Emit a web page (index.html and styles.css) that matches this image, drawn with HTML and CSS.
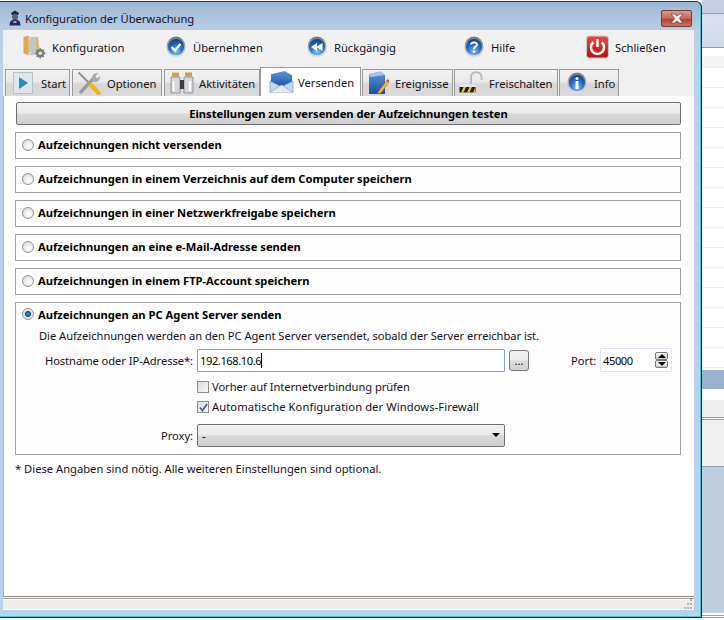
FILE: index.html
```html
<!DOCTYPE html>
<html>
  <head>
    <title>Konfiguration der Überwachung</title>
    <link rel="stylesheet" href="styles.css">
  </head>
  <body>
    <svg class="defs" width="0" height="0">
      <defs>
        <radialGradient id="orb" cx="0.5" cy="0.78" r="0.8">
          <stop offset="0" stop-color="#86c2f7"/>
          <stop offset="0.5" stop-color="#2c70c9"/>
          <stop offset="1" stop-color="#103a86"/>
        </radialGradient>
        <linearGradient id="ring" x1="0" y1="0" x2="0" y2="1">
          <stop offset="0" stop-color="#6f767c"/>
          <stop offset="1" stop-color="#dfe5ea"/>
        </linearGradient>
        <linearGradient id="red" x1="0" y1="0" x2="0" y2="1">
          <stop offset="0" stop-color="#ee4a44"/>
          <stop offset="1" stop-color="#b50f0f"/>
        </linearGradient>
        <linearGradient id="folder" x1="0" y1="0" x2="1" y2="1">
          <stop offset="0" stop-color="#f3d190"/>
          <stop offset="1" stop-color="#c99a4c"/>
        </linearGradient>
        <linearGradient id="mail" x1="0" y1="0" x2="0" y2="1">
          <stop offset="0" stop-color="#5b97dc"/>
          <stop offset="1" stop-color="#1c4f9e"/>
        </linearGradient>
        <symbol id="i-orb" viewBox="0 0 20 22">
          <ellipse cx="10" cy="11" rx="9.5" ry="10.5" fill="url(#ring)"/>
          <circle cx="10" cy="11" r="8" fill="url(#orb)"/>
        </symbol>
      </defs>
    </svg>

    <div class="window">
      <div class="titlebar">
        <svg class="title-icon" viewBox="0 0 14 16">
          <path d="M3 3 L7 0.5 L11 3 L10 5 H4 Z" fill="#1c2550"/>
          <circle cx="7" cy="7" r="3" fill="#5b6280"/>
          <path d="M1.5 15.5 C1.5 11 4 9.5 7 9.5 S12.5 11 12.5 15.5 Z" fill="#232c58"/>
          <rect x="5.5" y="11" width="3" height="2" fill="#9aa6d0"/>
        </svg>
        <span class="title-text">Konfiguration der Überwachung</span>
        <div class="close-btn">
          <svg viewBox="0 0 16 11" width="16" height="11">
            <path d="M2 1 H6 L8 3.2 L10 1 H14 L10.3 5.5 L14 10 H10 L8 7.8 L6 10 H2 L5.7 5.5 Z" fill="#f4f0ee" stroke="#6b3a36" stroke-width="0.7"/>
          </svg>
        </div>
      </div>

      <div class="client">
        <div class="toolbar">
          <div class="tool tool-config">
            <svg class="tool-icon-lg" viewBox="0 0 24 25">
              <path d="M0.5 2 L6 0.5 V21 L0.5 19 Z" fill="#d9a955"/>
              <path d="M6 2 H16 V18 H6 Z" fill="url(#folder)"/>
              <path d="M7 3 H14 V21 H7 Z" fill="#c3c6c8"/>
              <path d="M14 9 L17 11 V18 H14 Z" fill="#e0b971"/>
              <circle cx="18" cy="19" r="4.4" fill="#7d7f80"/>
              <circle cx="18" cy="19" r="1.8" fill="#e8e8e8"/>
              <path d="M18 13.5 V15 M18 23 V24.5 M12.5 19 H14 M22 19 H23.5 M14.2 15.2 L15.2 16.2 M20.8 21.8 L21.8 22.8 M21.8 15.2 L20.8 16.2 M15.2 21.8 L14.2 22.8" stroke="#7d7f80" stroke-width="1.6"/>
            </svg>
            <span>Konfiguration</span>
          </div>
          <div class="tool tool-apply">
            <svg class="tool-icon" viewBox="0 0 20 22">
              <use href="#i-orb"/>
              <path d="M5.5 11 L9 14.5 L14.5 8" fill="none" stroke="#fff" stroke-width="2.4"/>
            </svg>
            <span>Übernehmen</span>
          </div>
          <div class="tool tool-undo">
            <svg class="tool-icon" viewBox="0 0 20 22">
              <use href="#i-orb"/>
              <path d="M10 7 V15 L4 11 Z M15.5 7 V15 L9.5 11 Z" fill="#fff"/>
            </svg>
            <span>Rückgängig</span>
          </div>
          <div class="tool tool-help">
            <svg class="tool-icon" viewBox="0 0 20 22">
              <use href="#i-orb"/>
              <path d="M7 8.5 C7 5.8 13 5.8 13 8.7 C13 10.6 10 10.6 10 13" fill="none" stroke="#fff" stroke-width="1.9"/>
              <circle cx="10" cy="15.6" r="1.2" fill="#fff"/>
            </svg>
            <span>Hilfe</span>
          </div>
          <div class="tool tool-close">
            <svg class="tool-icon-lg" viewBox="0 0 22 22">
              <rect x="0.5" y="0.5" width="21" height="21" rx="3" fill="url(#red)" stroke="#c9c9c9"/>
              <path d="M7 6.5 A6.3 6.3 0 1 0 15 6.5" fill="none" stroke="#fff" stroke-width="2.3"/>
              <path d="M11 3.5 V11" stroke="#fff" stroke-width="2.4"/>
            </svg>
            <span>Schließen</span>
          </div>
        </div>

        <div class="tabs">
          <div class="tab tab-start">
            <svg class="tab-icon tab-icon-start" viewBox="0 0 20 22">
              <rect x="0.5" y="0.5" width="19" height="21" fill="#dfe6ea" stroke="#b8c2c8"/>
              <path d="M6 5 L15 11 L6 17 Z" fill="#1f8fb8"/>
            </svg>
            <span>Start</span>
          </div>
          <div class="tab tab-options">
            <svg class="tab-icon tab-icon-options" viewBox="0 0 24 24">
              <path d="M1.5 1.5 L13.5 13.5" stroke="#8c9094" stroke-width="2"/>
              <path d="M3 22 L16 8" stroke="#9a9da0" stroke-width="3.4"/>
              <path d="M14 14 L21.5 22" stroke="#eeb90c" stroke-width="4.4" stroke-linecap="round"/>
              <path d="M15 9 C14 5 17 1.5 21.5 2 L18.5 5 L20 7.5 L23 5 C23.5 9 20 12 16.5 11 Z" fill="#a7abae"/>
            </svg>
            <span>Optionen</span>
          </div>
          <div class="tab tab-activity">
            <svg class="tab-icon tab-icon-activity" viewBox="0 0 24 22">
              <rect x="2" y="0.5" width="7" height="4" fill="#c7a44c"/>
              <rect x="15" y="0.5" width="7" height="4" fill="#c7a44c"/>
              <path d="M1 5 H10 V21 H1 Z M14 5 H23 V21 H14 Z" fill="#d6d8d9" stroke="#777a7c" stroke-width="0.7"/>
              <path d="M10 8 H14 V17 H10 Z" fill="#3a3d40"/>
              <rect x="2.5" y="9" width="2" height="10" fill="#fff"/>
              <rect x="19" y="9" width="2" height="10" fill="#fff"/>
            </svg>
            <span>Aktivitäten</span>
          </div>
          <div class="tab tab-active">
            <svg class="tab-icon tab-icon-send" viewBox="0 0 26 24">
              <path d="M2 4 L16 0.5 L24 5 V14 L13 18 L2 13 Z" fill="url(#mail)"/>
              <path d="M1 11 L13 17 L25 11 V23 H1 Z" fill="#c3d6ea" stroke="#7f9cbc" stroke-width="0.7"/>
              <path d="M1 23 L13 15 L25 23" fill="#e2ecf5" stroke="#8aa7c6" stroke-width="0.7"/>
            </svg>
            <span>Versenden</span>
          </div>
          <div class="tab tab-events">
            <svg class="tab-icon tab-icon-events" viewBox="0 0 22 24">
              <path d="M1 3 L13 0.5 L17 4 V23 L1 23 Z" fill="url(#mail)"/>
              <path d="M1 3 L13 0.5 L17 4 L2 6 Z" fill="#a9c4e6"/>
              <path d="M10 21 L19 9 L21 11 L13 22 L9.5 23 Z" fill="#f2b63a" stroke="#8c5a1c" stroke-width="0.5"/>
              <path d="M18.3 10 L19.6 8 L21.6 10 L20.4 11.6 Z" fill="#d9503c"/>
            </svg>
            <span>Ereignisse</span>
          </div>
          <div class="tab tab-unlock">
            <svg class="tab-icon tab-icon-unlock" viewBox="0 0 24 24">
              <path d="M12 13 V6 C12 -0.5 22.5 -0.5 22.5 6 V9" fill="none" stroke="#b9bcbe" stroke-width="2"/>
              <rect x="0.5" y="13" width="16" height="10" fill="#e2e4e5"/>
              <rect x="0.5" y="16" width="16" height="5.5" fill="#1f1f1f"/>
              <path d="M2 21.5 L4.5 16 H7 L4.5 21.5 Z M8 21.5 L10.5 16 H13 L10.5 21.5 Z M14 21.5 L16 17 V21.5 Z" fill="#e8c72a"/>
            </svg>
            <span>Freischalten</span>
          </div>
          <div class="tab tab-info">
            <svg class="tab-icon tab-icon-info" viewBox="0 0 20 22">
              <use href="#i-orb"/>
              <circle cx="10" cy="6.5" r="1.5" fill="#fff"/>
              <rect x="8.6" y="9" width="2.8" height="8" fill="#fff"/>
            </svg>
            <span>Info</span>
          </div>
        </div>

        <div class="page">
          <button class="test-btn">Einstellungen zum versenden der Aufzeichnungen testen</button>

          <div class="group">
            <div class="radio-row"><span class="radio"></span><span class="radio-label">Aufzeichnungen nicht versenden</span></div>
          </div>
          <div class="group">
            <div class="radio-row"><span class="radio"></span><span class="radio-label">Aufzeichnungen in einem Verzeichnis auf dem Computer speichern</span></div>
          </div>
          <div class="group">
            <div class="radio-row"><span class="radio"></span><span class="radio-label">Aufzeichnungen in einer Netzwerkfreigabe speichern</span></div>
          </div>
          <div class="group">
            <div class="radio-row"><span class="radio"></span><span class="radio-label">Aufzeichnungen an eine e-Mail-Adresse senden</span></div>
          </div>
          <div class="group">
            <div class="radio-row"><span class="radio"></span><span class="radio-label">Aufzeichnungen in einem FTP-Account speichern</span></div>
          </div>

          <div class="group group-open">
            <div class="radio-row"><span class="radio radio-on"></span><span class="radio-label">Aufzeichnungen an PC Agent Server senden</span></div>
            <div class="desc">Die Aufzeichnungen werden an den PC Agent Server versendet, sobald der Server erreichbar ist.</div>
            <div class="field-row">
              <span class="field-label">Hostname oder IP-Adresse*:</span>
              <div class="input host-input"><span class="digits">192.168.10.6</span><span class="caret"></span></div>
              <div class="browse-btn">...</div>
              <span class="port-label">Port:</span>
              <div class="input port-input">
                <span class="digits">45000</span>
                <div class="spin">
                  <span class="spin-btn"><i class="arrow-up"></i></span>
                  <span class="spin-btn"><i class="arrow-down"></i></span>
                </div>
              </div>
            </div>
            <div class="check-list">
              <div class="check-row">
                <span class="check"></span><span class="check-text">Vorher auf Internetverbindung prüfen</span>
              </div>
              <div class="check-row">
                <span class="check check-on">
                  <svg viewBox="0 0 11 11" width="11" height="11"><path d="M2 5.5 L4.5 8.5 L9 2" fill="none" stroke="#4a5f8e" stroke-width="1.8"/></svg>
                </span><span class="check-text check-text-wide">Automatische Konfiguration der Windows-Firewall</span>
              </div>
            </div>
            <div class="field-row proxy-row">
              <span class="field-label">Proxy:</span>
              <div class="select"><span>-</span><i class="arrow-down select-arrow"></i></div>
            </div>
          </div>

          <div class="note">* Diese Angaben sind nötig. Alle weiteren Einstellungen sind optional.</div>
        </div>

        <div class="statusbar">
          <svg class="grip" viewBox="0 0 10 10" width="10" height="10">
            <path d="M8 0h2v2H8z M5 4h2v2H5z M8 4h2v2H8z M2 8h2v2H2z M5 8h2v2H5z M8 8h2v2H8z" fill="#b5b5b5"/>
          </svg>
        </div>
      </div>
    </div>

    <!-- the application behind the dialog -->
    <div class="behind">
      <div class="behind-head"></div>
      <div class="behind-rows">
        <div class="behind-row"></div>
        <div class="behind-row"></div>
        <div class="behind-row"></div>
        <div class="behind-row"></div>
        <div class="behind-row"></div>
        <div class="behind-row"></div>
        <div class="behind-row"></div>
        <div class="behind-row"></div>
        <div class="behind-row"></div>
        <div class="behind-row"></div>
        <div class="behind-row"></div>
        <div class="behind-row"></div>
        <div class="behind-row"></div>
        <div class="behind-row"></div>
        <div class="behind-row"></div>
        <div class="behind-row"></div>
        <div class="behind-selected"></div>
      </div>
      <div class="behind-foot"></div>
      <div class="behind-panel"></div>
      <div class="behind-desk"></div>
      <div class="behind-edge"></div>
    </div>
  </body>
</html>
```

FILE: styles.css
```css
body {
  margin: 0;
  width: 724px;
  height: 620px;
  overflow: hidden;
  display: flex;
  background: #fff;
  font-family: "Noto Sans", Tahoma, sans-serif;
  font-size: 11.2px;
  color: #000;
}

.defs {
  position: absolute;
}

.window {
  width: 702px;
  height: 617px;
  margin-top: 1px;
  flex: none;
  box-sizing: border-box;
  display: flex;
  flex-direction: column;
  padding: 0 7px 7px 3px;
  border-top: 1px solid #2c3238;
  border-right: 1px solid #111;
  border-bottom: 1px solid #111;
  border-top-right-radius: 6px;
  background: linear-gradient(#9bb8d6 0, #bcd0e4 30px, #b9d2ec 90px);
  box-shadow: inset -1px -1px 0 #2fcfe6;
}

.titlebar {
  height: 28px;
  display: flex;
  align-items: center;
  flex: none;
  padding-top: 4px;
  box-sizing: border-box;
  position: relative;
}

.title-icon {
  width: 14px;
  height: 16px;
  margin-left: 5px;
  margin-right: 3px;
  flex: none;
}

.title-text {
  color: #15111e;
  letter-spacing: -0.03px;
}

.close-btn {
  position: absolute;
  top: 8px;
  right: 2px;
  width: 31px;
  height: 17px;
  box-sizing: border-box;
  border: 1px solid #7a3a36;
  border-radius: 2px;
  background: linear-gradient(#d99c90, #c4675a 50%, #b23f34 55%, #c8715f);
  display: flex;
  align-items: center;
  justify-content: center;
}

.client {
  flex: 1;
  display: flex;
  flex-direction: column;
  background: #f0f0f0;
  min-height: 0;
}

.toolbar {
  height: 34px;
  position: relative;
  flex: none;
}

.tool {
  display: flex;
  align-items: center;
  height: 34px;
  position: absolute;
  top: 0;
  color: #14101c;
}

.tool-config { left: 20px; gap: 6px; }
.tool-apply { left: 163px; gap: 7px; }
.tool-undo { left: 304px; gap: 7px; }
.tool-help { left: 461px; gap: 7px; }
.tool-close { left: 583px; gap: 6px; }

.tool-icon {
  width: 20px;
  height: 22px;
}

.tool-icon-lg {
  width: 23px;
  height: 24px;
}

.tabs {
  height: 32px;
  flex: none;
  display: flex;
  align-items: flex-end;
  padding-left: 2px;
  gap: 2px;
}

.tab {
  height: 27px;
  box-sizing: border-box;
  display: flex;
  align-items: center;
  flex: none;
  border: 1px solid #9a9a9a;
  border-bottom: none;
  background: linear-gradient(#f2f2f2, #e9e9e9 45%, #d6d6d6 55%, #dadada);
  color: #14101c;
}

.tab-start { width: 65px; padding-left: 7px; gap: 8px; }
.tab-options { width: 90px; padding-left: 4px; gap: 6px; }
.tab-activity { width: 96px; padding-left: 5px; gap: 5px; }
.tab-events { width: 91px; margin-left: -1px; padding-left: 5px; gap: 5px; }
.tab-unlock { width: 104px; margin-left: -1px; padding-left: 4px; gap: 6px; }
.tab-info { width: 60px; margin-left: -1px; padding-left: 7px; gap: 7px; }

.tab-active {
  width: 101px;
  height: 29px;
  margin-left: -2px;
  padding-left: 8px;
  gap: 4px;
  background: #fff;
}

.tab-icon { flex: none; }
.tab-icon-start { width: 20px; height: 22px; }
.tab-icon-options { width: 24px; height: 24px; }
.tab-icon-activity { width: 24px; height: 22px; }
.tab-icon-send { width: 25px; height: 24px; }
.tab-icon-events { width: 22px; height: 24px; }
.tab-icon-unlock { width: 24px; height: 24px; }
.tab-icon-info { width: 20px; height: 22px; }

.page {
  flex: 1;
  background: #fff;
  border-bottom: 1px solid #8e8e8e;
  padding: 6px 13px 0 12px;
  display: flex;
  flex-direction: column;
  gap: 7px;
  min-height: 0;
  box-shadow: inset 1px 0 0 #b4b4b4;
}

.test-btn {
  height: 23px;
  width: 665px;
  margin: 0 0 0 1px;
  padding: 0;
  flex: none;
  border: 1px solid #6f6f6f;
  border-radius: 2px;
  background: linear-gradient(#f3f3f3, #ebebeb 45%, #d8d8d8 55%, #cfcfcf);
  font: bold 11.2px "Noto Sans", Tahoma, sans-serif;
  color: #000;
}

.group {
  height: 27px;
  width: 666px;
  flex: none;
  box-sizing: border-box;
  border: 1px solid #a0a0a0;
  background: #fdfdfd;
  padding-left: 6px;
}

.group-open {
  height: 153px;
}

.radio-row {
  display: flex;
  align-items: center;
  height: 23px;
  gap: 4px;
}

.radio {
  width: 12px;
  height: 12px;
  box-sizing: border-box;
  flex: none;
  border-radius: 50%;
  border: 1px solid #8f9499;
  background: radial-gradient(circle at 60% 65%, #fff 0, #e4e6e8 60%, #cfd2d5 100%);
}

.radio-on {
  background: radial-gradient(circle closest-side, #4a9ad8 0, #12468a 55%, #dfe5ea 64%, #eef1f3 100%);
}

.radio-label {
  font-weight: bold;
}

.group-open .radio-row {
  height: 22px;
}

.desc {
  margin-left: 17px;
  height: 23px;
  line-height: 22px;
  color: #14101c;
  letter-spacing: -0.045px;
}

.field-row {
  display: flex;
  align-items: center;
  height: 24px;
}

.field-label {
  width: 171px;
  text-align: right;
  margin-right: 4px;
  color: #14101c;
  letter-spacing: -0.07px;
}

.input {
  box-sizing: border-box;
  height: 23px;
  border: 1px solid #8fb4d6;
  border-radius: 1px;
  background: #fff;
  display: flex;
  align-items: center;
  padding-left: 2px;
}

.digits {
  letter-spacing: -0.45px;
}

.host-input {
  width: 308px;
  border-color: #7aa6cb;
}

.caret {
  width: 1px;
  height: 15px;
  background: #000;
}

.browse-btn {
  width: 20px;
  height: 21px;
  margin-left: 4px;
  box-sizing: border-box;
  border: 1px solid #777;
  border-radius: 3px;
  background: linear-gradient(#f2f2f2, #ebebeb 45%, #dadada 55%, #d2d2d2);
  text-align: center;
  line-height: 20px;
  font-size: 11px;
}

.port-label {
  margin-left: 42px;
  width: 29px;
  color: #14101c;
}

.port-input {
  width: 72px;
  height: 24px;
  border-color: #dbe6f0;
  justify-content: space-between;
  padding-right: 3px;
}

.spin {
  display: flex;
  flex-direction: column;
}

.spin-btn {
  width: 13px;
  height: 8px;
  box-sizing: border-box;
  border: 1px solid #777;
  border-radius: 2px;
  background: linear-gradient(#f4f4f4, #d2d2d2);
  display: flex;
  align-items: center;
  justify-content: center;
}

.arrow-up {
  border-left: 4px solid transparent;
  border-right: 4px solid transparent;
  border-bottom: 4px solid #000;
}

.arrow-down {
  border-left: 4px solid transparent;
  border-right: 4px solid transparent;
  border-top: 4px solid #000;
}

.check-list {
  margin-top: 5px;
  margin-left: 175px;
}

.check-row {
  height: 20px;
  display: flex;
  align-items: center;
  gap: 3px;
  color: #14101c;
}

.check-text {
  margin-top: -1px;
  letter-spacing: -0.08px;
}

.check-text-wide {
  letter-spacing: 0.09px;
}

.check {
  width: 12px;
  height: 12px;
  box-sizing: border-box;
  flex: none;
  border: 1px solid #8e8f8f;
  background: linear-gradient(135deg, #dcdcdc, #f8f8f8);
}

.check-on svg {
  display: block;
  margin: -0.5px;
}

.proxy-row {
  margin-top: 6px;
}

.select {
  width: 308px;
  height: 23px;
  box-sizing: border-box;
  border: 1px solid #6f6f6f;
  border-radius: 2px;
  background: linear-gradient(#f2f2f2, #ebebeb 45%, #d8d8d8 55%, #cfcfcf);
  display: flex;
  align-items: center;
  justify-content: space-between;
  padding: 0 3px 0 4px;
}

.select-arrow {
  margin-right: 1px;
}

.note {
  margin-top: -2px;
  height: 18px;
  line-height: 18px;
  color: #14101c;
}

.statusbar {
  height: 13px;
  flex: none;
  background: linear-gradient(#fff 0, #fff 1px, #9a9a9a 1px, #9a9a9a 2px, #fff 2px, #fff 3px, #efecea 3px, #efecea 12px, #fff 12px);
  display: flex;
  justify-content: flex-end;
  align-items: flex-end;
}

.grip {
  margin-right: 2px;
  margin-bottom: 1px;
}

/* application behind the dialog */
.behind {
  flex: 1;
  display: flex;
  flex-direction: column;
}

.behind-head {
  height: 47px;
  flex: none;
  background: linear-gradient(#c5cfe2 0, #c5cfe2 13px, #9a9a9a 13px, #9a9a9a 14px, #d9dfee 14px, #d0d8ea 100%);
}

.behind-rows {
  flex: none;
  background: #fff;
}

.behind-row {
  height: 20px;
  border-bottom: 1px solid #eee;
  box-sizing: border-box;
}

.behind-row:first-child {
  height: 21px;
  border-top: 1px solid #999;
  background: linear-gradient(#fff 8px, #f4f4f4 8px);
}

.behind-selected {
  height: 19px;
  margin-top: 2px;
  background: #9ab2d0;
}

.behind-foot {
  height: 31px;
  flex: none;
  background: linear-gradient(#fff 0, #fff 11px, #eeeeee 11px, #eeeeee 28px, #a0a0a0 28px, #a0a0a0 29px, #fff 29px, #fff 30px, #a0a0a0 30px);
}

.behind-panel {
  height: 47px;
  flex: none;
  background: #f0f0f0;
  border-bottom: 1px solid #8f9aa8;
  box-sizing: border-box;
}

.behind-desk {
  flex: 1;
  background: #c0cedd;
}

.behind-edge {
  height: 7px;
  flex: none;
  background: linear-gradient(#fff 0, #fff 2px, #a0a0a0 2px, #a0a0a0 3px, #fff 3px, #fff 4px, #a0a0a0 4px, #a0a0a0 5px, #fff 5px);
}
```
